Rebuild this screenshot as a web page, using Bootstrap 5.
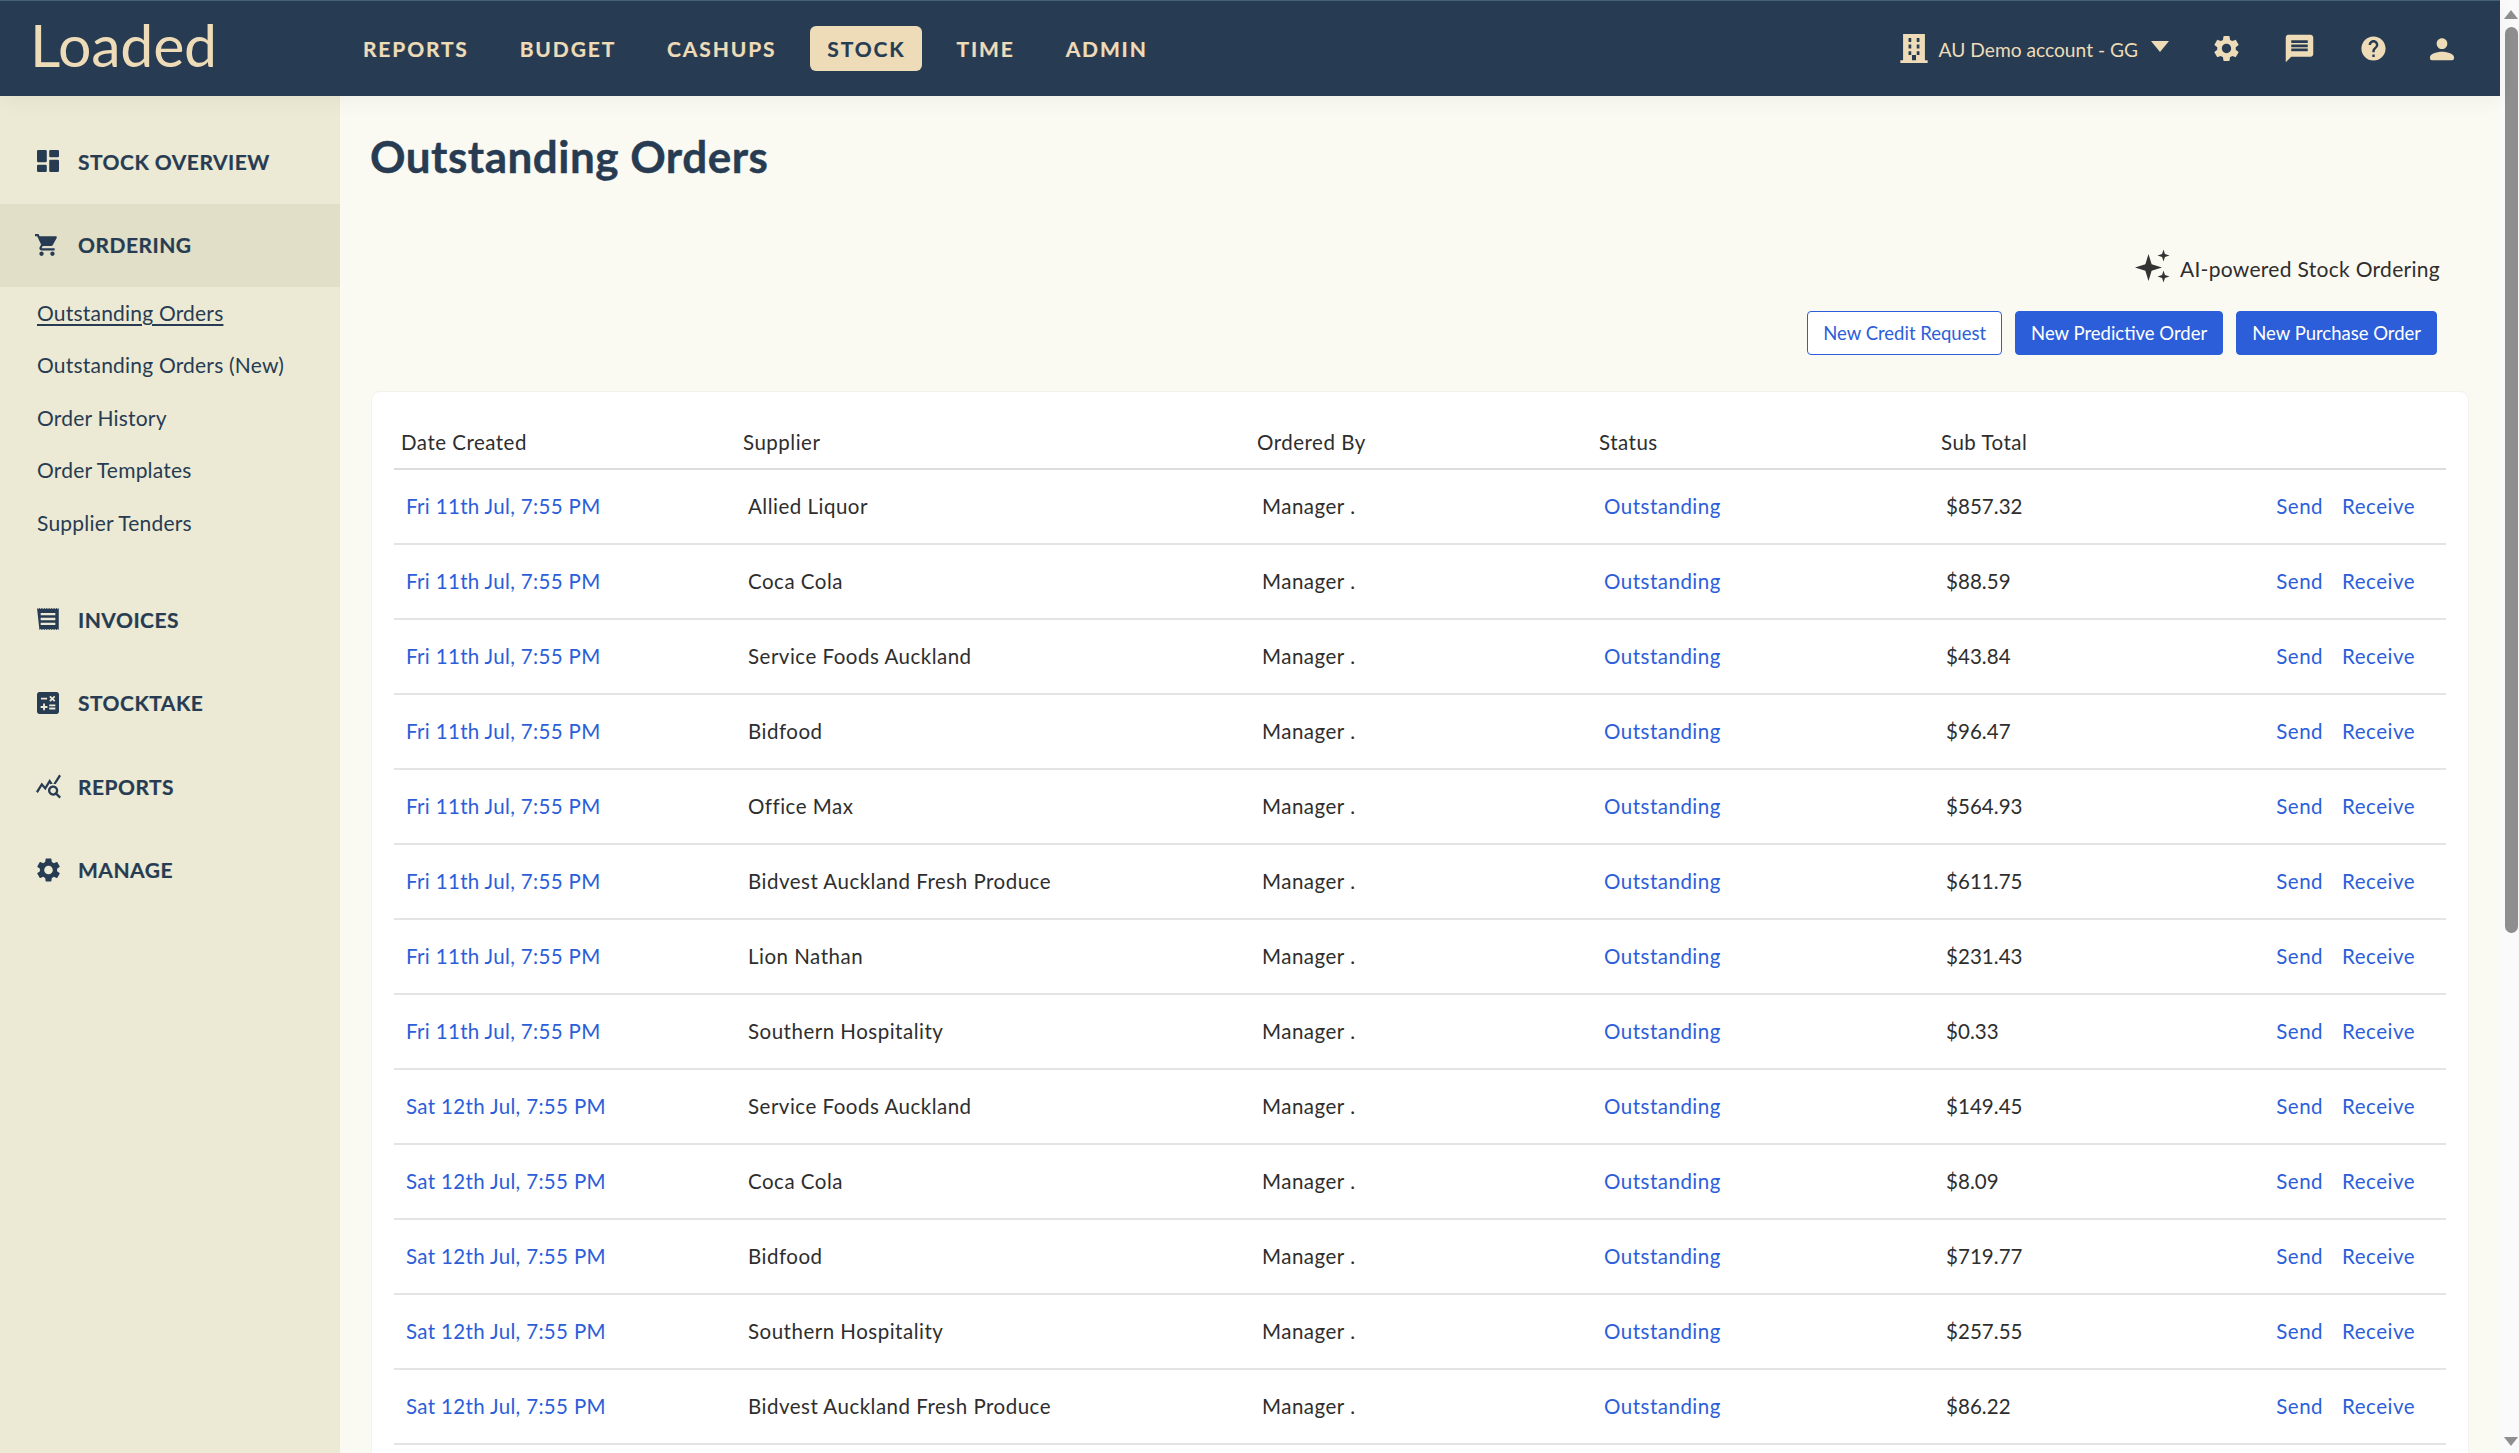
<!DOCTYPE html>
<html lang="en">
<head>
<meta charset="utf-8">
<title>Outstanding Orders</title>
<link rel="stylesheet" href="https://cdn.jsdelivr.net/npm/bootstrap@5.3.0/dist/css/bootstrap.min.css">
<style>
html,body{height:100%;overflow:hidden;background:#faf9f2;font-family:"Lato","Liberation Sans",sans-serif;color:#2e2e2e}
.appshell{height:1453px}
.appmain{width:2500px;min-width:0}
.fakebar{width:19px;flex:none;background:#fafafa}
.fakethumb{width:13px;height:906px;background:#8e8e8e;border-radius:7px;margin-left:5px;margin-top:8px;flex:none}
.arrow-up,.arrow-down{width:0;height:0;border-left:7.5px solid transparent;border-right:7.5px solid transparent;margin-left:4px;flex:none}
.arrow-up{border-bottom:9px solid #8e8e8e;margin-top:10px}
.arrow-down{border-top:9px solid #8e8e8e;margin-top:auto;margin-bottom:7px}
.topbar{height:96px;flex:none;background:#273c52;border-top:1px solid #46607a;padding:0;position:relative;z-index:5;box-shadow:0 6px 18px rgba(0,0,0,.045)}
.brandword{font-family:"Lato",sans-serif;font-weight:400;font-size:59px;line-height:1;color:#eedcb9;letter-spacing:-.2px;margin:0 0 0 30px;padding:0;width:316px;position:relative;top:-4px}
.brandword:hover{color:#eedcb9}
.topnav{gap:17px}
.topbar .topnav .nav-item .nav-link{font-size:21px;font-weight:700;letter-spacing:1.85px;-webkit-text-stroke:.2px;color:#eedcb9;padding:0 17px;height:45px;line-height:45px;border-radius:6px}
.topbar .topnav .nav-item .nav-link.active{background:#eedcb9;color:#273c52}
.acct{color:#eedcb9;font-size:19.2px;font-weight:400;margin-left:10px;margin-top:3px}
.topicons{margin-right:42px}
.caretico{margin-left:13px;margin-top:-4px;flex:none}
.iconbtn{fill:#eedcb9;flex:none}
.ib-house{width:30px;height:29px}
.ib-gear{width:31px;height:31px;margin-left:41.5px}
.ib-chat{width:33px;height:33px;margin-left:41.5px}
.ib-help{width:29px;height:29px;margin-left:42.5px}
.ib-user{width:32px;height:32px;margin-left:38.5px}
.sidepane{width:340px;flex:none;background:#ecead4;padding-top:24px}
.sideitem{height:83.5px;padding-left:37px;padding-bottom:1px;color:#273c52;font-weight:700;font-size:21px;letter-spacing:.48px;-webkit-text-stroke:.2px;text-decoration:none}
.sideitem:hover{color:#273c52}
.sideitem.current{background:#e1dfc8}
.sideitem svg{width:22px;height:22px;margin-right:19px;fill:#273c52;flex:none}
.sideitem svg.ico-lg{width:24px;height:24px;margin-left:-2px}
.sideitem svg.ico-rep{width:25px;height:25px;margin-left:-1px;margin-right:17px}
.sideitem svg.ico-gear{width:23px;height:24px;margin-right:18px}
.sublist{padding:0 0 0 37px;height:291px}
.sublist a{display:flex;align-items:center;height:52.5px;padding-bottom:1.5px;color:#273c52;font-size:21px;font-weight:400;letter-spacing:.2px;text-decoration:none}
.sublist a.here{text-decoration:underline;text-underline-offset:3px}
.contentpane{padding:0 31px;min-width:0;overflow:hidden}
.pagehead{font-size:44px;font-weight:700;letter-spacing:.5px;-webkit-text-stroke:.4px;color:#273c52;margin:34px 0 0 -1px;line-height:52px}
.aibar{font-size:21px;letter-spacing:.3px;color:#2e2e2e;margin-top:68.5px;padding-right:29px;height:36px}
.aibar svg{width:36px;height:36px;fill:#333;margin-right:9px;margin-top:-6px}
.actionbar{gap:13px;margin-top:24px;padding-right:32px}
.actionbar .btn{height:44px;font-size:18.5px;line-height:42px;padding:0 15px;border-radius:4px}
.btn-blue,.btn-blue:hover{background:#2c5ed9;border-color:#2c5ed9;color:#fff}
.btn-blueline,.btn-blueline:hover{background:#fff;border-color:#2c5ed9;color:#2c5ed9}
.ordercard{margin-top:36px;border:1px solid #f3f2ec;border-radius:9px;background:#fff;padding:22px 22px 0;height:1100px}
.ordertable{table-layout:fixed;width:100%;margin:0;font-size:20.5px;letter-spacing:.5px;color:#2e2e2e}
.ordertable th{font-weight:400;padding:14px 7px 0;height:55px;border-bottom:2px solid #dcdcdc;vertical-align:top;line-height:28px;width:342px}
.ordertable th:nth-child(2){width:514px}
.ordertable th:nth-child(6){width:auto}
.ordertable td{height:75px;padding:0 12px;border-bottom:2px solid #e4e4e4;vertical-align:middle;white-space:nowrap}
.ordertable td:nth-child(1){letter-spacing:.34px}
.ordertable td:nth-child(5){letter-spacing:.05px}
.ordertable a{color:#2c5ed9;text-decoration:none}
.ordertable td.acts{text-align:right;padding-right:31px;padding-left:0}
.acts a+a{margin-left:19px}
</style>
</head>
<body>
<div class="appshell d-flex">
  <div class="appmain d-flex flex-column">
    <nav class="navbar navbar-expand topbar">
      <div class="d-flex align-items-center w-100">
        <a class="navbar-brand brandword" href="#">Loaded</a>
        <ul class="navbar-nav topnav align-items-center">
          <li class="nav-item"><a class="nav-link" href="#">REPORTS</a></li>
          <li class="nav-item"><a class="nav-link" href="#">BUDGET</a></li>
          <li class="nav-item"><a class="nav-link" href="#">CASHUPS</a></li>
          <li class="nav-item"><a class="nav-link active" href="#">STOCK</a></li>
          <li class="nav-item"><a class="nav-link" href="#">TIME</a></li>
          <li class="nav-item"><a class="nav-link" href="#">ADMIN</a></li>
        </ul>
        <div class="ms-auto d-flex align-items-center topicons">
          <svg class="iconbtn ib-house" viewBox="1 1 22 22" preserveAspectRatio="none"><path fill-rule="evenodd" d="M4 1h16v20h2v2H2v-2h2zM8 4v3h2V4zm6 0v3h2V4zM8 9v3h2V9zm6 0v3h2V9zM8 14v3h2v-3zm6 0v3h2v-3zm-3.500 3v4h3v-4z"/></svg>
          <span class="acct">AU Demo account - GG</span>
          <svg width="18" height="11" viewBox="0 0 18 11" class="caretico"><path d="M0 0h18L9 11z" fill="#eedcb9"/></svg>
          <svg class="iconbtn ib-gear" viewBox="0 0 24 24"><path d="M19.14 12.94c.04-.3.06-.61.06-.94 0-.32-.02-.64-.07-.94l2.03-1.58c.18-.14.23-.41.12-.61l-1.92-3.32c-.12-.22-.37-.29-.59-.22l-2.39.96c-.5-.38-1.03-.7-1.62-.94l-.36-2.54c-.04-.24-.24-.41-.48-.41h-3.84c-.24 0-.43.17-.47.41l-.36 2.54c-.59.24-1.13.57-1.62.94l-2.39-.96c-.22-.08-.47 0-.59.22L2.74 8.87c-.12.21-.08.47.12.61l2.03 1.58c-.05.3-.09.63-.09.94s.02.64.07.94l-2.03 1.58c-.18.14-.23.41-.12.61l1.92 3.32c.12.22.37.29.59.22l2.39-.96c.5.38 1.03.7 1.62.94l.36 2.54c.05.24.24.41.48.41h3.84c.24 0 .44-.17.47-.41l.36-2.54c.59-.24 1.13-.56 1.62-.94l2.39.96c.22.08.47 0 .59-.22l1.92-3.32c.12-.22.07-.47-.12-.61l-2.01-1.58zM12 15.6c-1.98 0-3.6-1.62-3.6-3.6s1.620-3.6 3.6-3.6 3.6 1.62 3.6 3.6-1.62 3.6-3.6 3.6z"/></svg>
          <svg class="iconbtn ib-chat" viewBox="0 0 24 24"><path fill-rule="evenodd" d="M20 2H4c-1.100 0-2 .9-2 2v18l4-4h14c1.100 0 2-.9 2-2V4c0-1.100-.9-2-2-2zM6 6h12v2H6zm0 3h12v2H6zm0 3h12v2H6z"/></svg>
          <svg class="iconbtn ib-help" viewBox="0 0 24 24"><path d="M12 2C6.480 2 2 6.480 2 12s4.480 10 10 10 10-4.480 10-10S17.520 2 12 2zm1 17h-2v-2h2v2zm2.070-7.750l-.9.920C13.450 12.900 13 13.500 13 15h-2v-.5c0-1.100.45-2.100 1.170-2.830l1.240-1.260c.37-.36.59-.86.59-1.410 0-1.100-.9-2-2-2s-2 .9-2 2H8c0-2.210 1.790-4 4-4s4 1.790 4 4c0 .88-.36 1.680-.93 2.250z"/></svg>
          <svg class="iconbtn ib-user" viewBox="0 0 24 24"><path d="M12 12c2.210 0 4-1.790 4-4s-1.790-4-4-4-4 1.790-4 4 1.790 4 4 4zm0 2c-2.670 0-9 1.340-9 4v1c0 1 .5 1.500 1.500 1.500h15c1 0 1.500-.5 1.500-1.500v-1c0-2.660-6.330-4-9-4z"/></svg>
        </div>
      </div>
    </nav>
    <div class="d-flex flex-grow-1" style="min-height:0">
      <aside class="sidepane">
        <a class="sideitem d-flex align-items-center" href="#"><svg viewBox="3 3 18 18"><path d="M4 3h6a1 1 0 0 1 1 1v8a1 1 0 0 1-1 1H4a1 1 0 0 1-1-1V4a1 1 0 0 1 1-1zm0 12h6a1 1 0 0 1 1 1v4a1 1 0 0 1-1 1H4a1 1 0 0 1-1-1v-4a1 1 0 0 1 1-1zm10-4h6a1 1 0 0 1 1 1v8a1 1 0 0 1-1 1h-6a1 1 0 0 1-1-1v-8a1 1 0 0 1 1-1zm0-8h6a1 1 0 0 1 1 1v4a1 1 0 0 1-1 1h-6a1 1 0 0 1-1-1V4a1 1 0 0 1 1-1z"/></svg>STOCK OVERVIEW</a>
        <a class="sideitem current d-flex align-items-center" href="#"><svg class="ico-lg" viewBox="1 2 22 20"><path d="M7 18c-1.100 0-1.990.9-1.990 2S5.900 22 7 22s2-.9 2-2-.9-2-2-2zM1 2v2h2l3.600 7.590-1.350 2.450c-.16.28-.25.61-.25.96 0 1.100.9 2 2 2h12v-2H7.420c-.14 0-.25-.11-.25-.25l.03-.12.9-1.630h7.450c.75 0 1.410-.41 1.750-1.030l3.580-6.490c.08-.14.12-.31.12-.48 0-.55-.45-1-1-1H5.210l-.94-2H1zm16 16c-1.100 0-1.990.9-1.990 2s.89 2 1.990 2 2-.9 2-2-.9-2-2-2z"/></svg>ORDERING</a>
        <div class="sublist">
          <a class="here" href="#">Outstanding Orders</a>
          <a href="#">Outstanding Orders (New)</a>
          <a href="#">Order History</a>
          <a href="#">Order Templates</a>
          <a href="#">Supplier Tenders</a>
        </div>
        <a class="sideitem d-flex align-items-center" href="#"><svg viewBox="3 3 18 18"><path fill-rule="evenodd" d="M3 3l1 .8L5 3l1 .8L7 3l1 .8L9 3l1 .8 1-.8 1 .8 1-.8 1 .8 1-.8 1 .8 1-.8 1 .8 1-.8 1 .8.8-.8v18l-.8-.8-1 .8-1-.8-1 .8-1-.8-1 .8-1-.8-1 .8-1-.8-1 .8-1-.8-1 .8-1-.8-1 .8-1-.8-1 .8zM6 7v2h12V7zm0 4v2h12v-2zm0 4v2h12v-2z"/></svg>INVOICES</a>
        <a class="sideitem d-flex align-items-center" href="#"><svg viewBox="3 3 18 18"><path d="M19 3H5c-1.100 0-2 .9-2 2v14c0 1.100.9 2 2 2h14c1.100 0 2-.9 2-2V5c0-1.100-.9-2-2-2zm-5.970 4.060L14.090 6l1.410 1.410L16.910 6l1.060 1.060-1.410 1.410 1.410 1.410-1.060 1.060-1.410-1.400-1.410 1.410-1.060-1.060 1.410-1.410-1.410-1.420zm-6.780.66h5v1.500h-5v-1.500zM11.500 16h-2v2H8v-2H6v-1.500h2v-2h1.500v2h2V16zm6.500 1.250h-5v-1.500h5v1.500zm0-2.500h-5v-1.500h5v1.500z"/></svg>STOCKTAKE</a>
        <a class="sideitem d-flex align-items-center" href="#"><svg class="ico-rep" viewBox="1 2 22 21"><path d="M19.880 18.470c.44-.7.7-1.510.7-2.390 0-2.490-2.010-4.500-4.500-4.500s-4.500 2.010-4.500 4.500 2.010 4.500 4.490 4.500c.88 0 1.700-.26 2.390-.7L21.580 23 23 21.580l-3.120-3.110zm-3.800.11c-1.380 0-2.500-1.120-2.500-2.500s1.120-2.500 2.500-2.500 2.500 1.120 2.500 2.500-1.120 2.500-2.500 2.500zm-.36-8.500c-.74.02-1.450.18-2.100.45l-.55-.83-3.800 6.180-3.010-3.520-3.630 5.810L1 17l5-8 3 3.500L13 6l2.720 4.080zm2.590.5c-.64-.28-1.330-.45-2.050-.49L21.380 2 23 3.180l-4.690 7.400z"/></svg>REPORTS</a>
        <a class="sideitem d-flex align-items-center" href="#"><svg class="ico-gear" viewBox="2.500 2 19 20"><path d="M19.140 12.940c.04-.3.06-.61.06-.94 0-.32-.02-.64-.07-.94l2.030-1.580c.18-.14.23-.41.12-.61l-1.920-3.320c-.12-.22-.37-.29-.59-.22l-2.390.96c-.5-.38-1.030-.7-1.620-.94l-.36-2.540c-.04-.24-.24-.41-.48-.41h-3.840c-.24 0-.43.17-.47.41l-.36 2.540c-.59.24-1.130.57-1.620.94l-2.390-.96c-.22-.08-.47 0-.59.22L2.740 8.870c-.12.21-.08.47.12.61l2.030 1.580c-.05.3-.09.63-.09.94s.02.64.07.94l-2.030 1.580c-.18.14-.23.41-.12.61l1.920 3.320c.12.22.37.29.59.22l2.39-.96c.5.38 1.030.7 1.620.94l.36 2.54c.05.24.24.41.48.41h3.840c.24 0 .44-.17.47-.41l.36-2.54c.59-.24 1.130-.56 1.620-.94l2.390.96c.22.08.47 0 .59-.22l1.920-3.320c.12-.22.07-.47-.12-.61l-2.010-1.580zM12 15.600c-1.980 0-3.600-1.620-3.600-3.600s1.620-3.600 3.600-3.600 3.600 1.620 3.600 3.600-1.620 3.600-3.600 3.600z"/></svg>MANAGE</a>
      </aside>
      <main class="contentpane flex-grow-1">
        <h1 class="pagehead">Outstanding Orders</h1>
        <div class="aibar d-flex justify-content-end align-items-center"><svg viewBox="0 0 24 24"><path d="M9 4l2.100 6.900L18 13l-6.900 2.100L9 22l-2.100-6.900L0 13l6.900-2.100zM19 1l.95 3.050L23 5l-3.050.95L19 9l-.95-3.050L15 5l3.050-.95zM19 15l.95 3.050L23 19l-3.050.95L19 23l-.95-3.050L15 19l3.050-.95z"/></svg>AI-powered Stock Ordering</div>
        <div class="actionbar d-flex justify-content-end">
          <a class="btn btn-blueline" href="#">New Credit Request</a>
          <a class="btn btn-blue" href="#">New Predictive Order</a>
          <a class="btn btn-blue" href="#">New Purchase Order</a>
        </div>
        <div class="card ordercard">
          <table class="table ordertable">
            <thead><tr><th>Date Created</th><th>Supplier</th><th>Ordered By</th><th>Status</th><th>Sub Total</th><th></th></tr></thead>
            <tbody>
              <tr><td><a href="#">Fri 11th Jul, 7:55 PM</a></td><td>Allied Liquor</td><td>Manager .</td><td><a href="#">Outstanding</a></td><td>$857.32</td><td class="acts"><a href="#">Send</a><a href="#">Receive</a></td></tr>
              <tr><td><a href="#">Fri 11th Jul, 7:55 PM</a></td><td>Coca Cola</td><td>Manager .</td><td><a href="#">Outstanding</a></td><td>$88.59</td><td class="acts"><a href="#">Send</a><a href="#">Receive</a></td></tr>
              <tr><td><a href="#">Fri 11th Jul, 7:55 PM</a></td><td>Service Foods Auckland</td><td>Manager .</td><td><a href="#">Outstanding</a></td><td>$43.84</td><td class="acts"><a href="#">Send</a><a href="#">Receive</a></td></tr>
              <tr><td><a href="#">Fri 11th Jul, 7:55 PM</a></td><td>Bidfood</td><td>Manager .</td><td><a href="#">Outstanding</a></td><td>$96.47</td><td class="acts"><a href="#">Send</a><a href="#">Receive</a></td></tr>
              <tr><td><a href="#">Fri 11th Jul, 7:55 PM</a></td><td>Office Max</td><td>Manager .</td><td><a href="#">Outstanding</a></td><td>$564.93</td><td class="acts"><a href="#">Send</a><a href="#">Receive</a></td></tr>
              <tr><td><a href="#">Fri 11th Jul, 7:55 PM</a></td><td>Bidvest Auckland Fresh Produce</td><td>Manager .</td><td><a href="#">Outstanding</a></td><td>$611.75</td><td class="acts"><a href="#">Send</a><a href="#">Receive</a></td></tr>
              <tr><td><a href="#">Fri 11th Jul, 7:55 PM</a></td><td>Lion Nathan</td><td>Manager .</td><td><a href="#">Outstanding</a></td><td>$231.43</td><td class="acts"><a href="#">Send</a><a href="#">Receive</a></td></tr>
              <tr><td><a href="#">Fri 11th Jul, 7:55 PM</a></td><td>Southern Hospitality</td><td>Manager .</td><td><a href="#">Outstanding</a></td><td>$0.33</td><td class="acts"><a href="#">Send</a><a href="#">Receive</a></td></tr>
              <tr><td><a href="#">Sat 12th Jul, 7:55 PM</a></td><td>Service Foods Auckland</td><td>Manager .</td><td><a href="#">Outstanding</a></td><td>$149.45</td><td class="acts"><a href="#">Send</a><a href="#">Receive</a></td></tr>
              <tr><td><a href="#">Sat 12th Jul, 7:55 PM</a></td><td>Coca Cola</td><td>Manager .</td><td><a href="#">Outstanding</a></td><td>$8.09</td><td class="acts"><a href="#">Send</a><a href="#">Receive</a></td></tr>
              <tr><td><a href="#">Sat 12th Jul, 7:55 PM</a></td><td>Bidfood</td><td>Manager .</td><td><a href="#">Outstanding</a></td><td>$719.77</td><td class="acts"><a href="#">Send</a><a href="#">Receive</a></td></tr>
              <tr><td><a href="#">Sat 12th Jul, 7:55 PM</a></td><td>Southern Hospitality</td><td>Manager .</td><td><a href="#">Outstanding</a></td><td>$257.55</td><td class="acts"><a href="#">Send</a><a href="#">Receive</a></td></tr>
              <tr><td><a href="#">Sat 12th Jul, 7:55 PM</a></td><td>Bidvest Auckland Fresh Produce</td><td>Manager .</td><td><a href="#">Outstanding</a></td><td>$86.22</td><td class="acts"><a href="#">Send</a><a href="#">Receive</a></td></tr>
            </tbody>
          </table>
        </div>
      </main>
    </div>
  </div>
  <div class="fakebar d-flex flex-column">
    <div class="arrow-up"></div>
    <div class="fakethumb"></div>
    <div class="arrow-down"></div>
  </div>
</div>
<script src="https://cdn.jsdelivr.net/npm/bootstrap@5.3.0/dist/js/bootstrap.bundle.min.js"></script>
</body>
</html>
